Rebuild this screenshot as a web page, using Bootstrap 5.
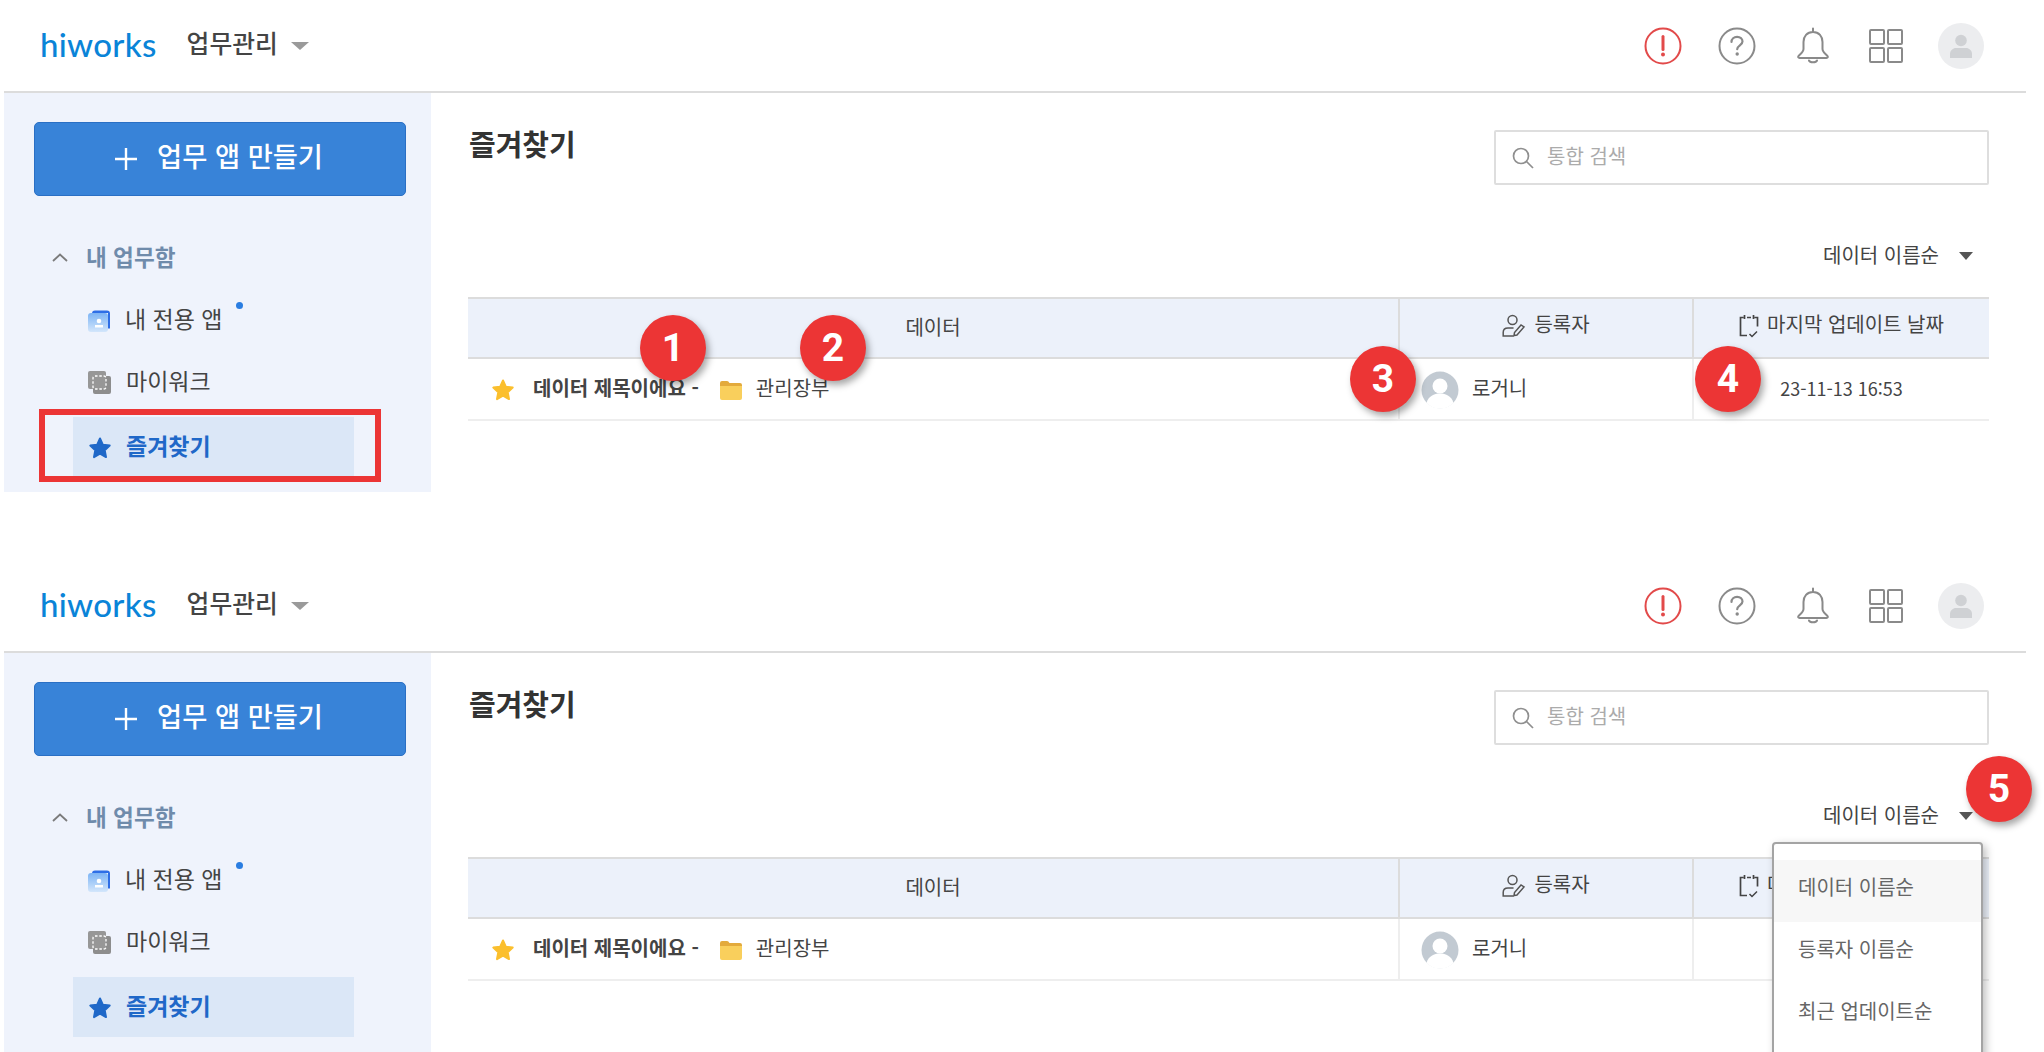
<!DOCTYPE html>
<html lang="ko">
<head>
  <meta charset="UTF-8">
  <title>hiworks 업무관리 - 즐겨찾기</title>
  <link href="https://cdn.jsdelivr.net/npm/bootstrap@5.3.3/dist/css/bootstrap.min.css" rel="stylesheet">
  <style>
    body { background: #fff; color: #333; font-family: "Noto Sans CJK KR", "Noto Sans", sans-serif; overflow: hidden; }
    .shot { position: relative; height: 492px; overflow: hidden; padding: 0 18px 0 4px; }
    .shot + .shot { margin-top: 68px; }
    .top-bar { height: 93px; border-bottom: 2px solid #dcdcdc; padding-left: 36px; padding-right: 42px; }
    .logo-text { font-family: "Lato", sans-serif; font-size: 33px; font-weight: 500; color: #0a84d8; letter-spacing: .3px; line-height: 1; margin-top: -2px; }
    .app-name { font-size: 24.800px; font-weight: 500; color: #444; margin-left: 30px; line-height: 1; margin-top: -6px; }
    .tri-down { display: inline-block; width: 0; height: 0; border-left: 9px solid transparent; border-right: 9px solid transparent; border-top: 8px solid #9a9a9a; margin-left: 13px; }
    .top-icons { gap: 38px; }
    .ic-help { margin-left: -2px; }
    .ic-bell { margin-left: 2px; }
    .ic-grid { margin-left: 1px; }
    .user-circle { width: 46px; height: 46px; border-radius: 50%; background: #ecedef; margin-left: -3px; }

    .side-panel { width: 427px; flex: none; background: #eff3fc; padding: 29px 25px 0 30px; height: 399px; }
    .make-btn { width: 372px; height: 74px; padding: 0 0 7px 3px; background: #3883d8; border: 1px solid #2a6fc4; border-radius: 5px; color: #fff; font-size: 27.300px; font-weight: 500; gap: 19px; }
    .make-btn svg { margin: 7px 0 0 -6px; }
    .make-btn:hover { background: #3883d8; color: #fff; }
    .group-title { height: 40px; margin-top: 41px; padding-left: 18px; font-size: 22.600px; font-weight: 700; color: #6f8bab; gap: 18px; }
    .side-item { position: relative; height: 60px; margin-left: 39px; width: 281px; padding: 0 0 3px 15px; gap: 15px; font-size: 23px; color: #444; }
    .side-item svg { margin-top: 4px; }
    .side-item.first-item { margin-top: 13px; }
    .side-item + .side-item { margin-top: 2px; }
    .side-item.on { background: #dbe7f7; color: #1f68c8; font-weight: 700; margin-top: 5px; gap: 14px; }
    .new-dot { width: 7px; height: 7px; border-radius: 50%; background: #2a7de1; margin: -26px 0 0 -2px; }
    .red-frame { position: absolute; left: -34px; top: -8px; width: 342px; height: 73px; border: 6px solid #ec3535; }

    .main-area { padding: 35px 37px 0 37px; min-width: 0; }
    .page-title { font-size: 29px; font-weight: 700; line-height: 31px; margin: 0 0 0 1px; color: #333; }
    .search-box { width: 495px; height: 55px; margin-top: 2px; border: 2px solid #dedede; border-radius: 2px; padding-left: 16px; gap: 13px; font-size: 20px; color: #ababab; }
    .search-hint { margin-top: -3px; }
    .sort-row { position: relative; height: 30px; margin-top: 56px; padding-right: 16px; font-size: 20px; color: #444; }
    .sort-label { margin-top: -3px; }
    .sort-tri { display: inline-block; width: 0; height: 0; border-left: 7px solid transparent; border-right: 7px solid transparent; border-top: 8px solid #555; margin-left: 20px; }
    .sort-menu { display: block; left: auto; right: 6px; top: 41px; width: 211px; min-width: 0; margin: 0; padding: 16px 0; border: 2px solid #a4a4a4; border-radius: 4px; box-shadow: 3px 3px 8px rgba(0,0,0,.25); }
    .sort-menu .dropdown-item { height: 62px; line-height: 54px; padding: 0 0 0 24px; font-size: 20px; color: #666; }
    .sort-menu .dropdown-item.picked { background: #f7f7f7; }

    .data-table { table-layout: fixed; width: 1521px; margin: 26px 0 0 0; border-collapse: collapse; font-size: 20px; color: #444; }
    .data-table th { height: 60px; background: #ecf1fa; font-weight: 400; text-align: center; vertical-align: middle; border-top: 2px solid #dcdcdc; border-bottom: 2px solid #dcdcdc; padding: 0 0 2px; color: #444; }
    .data-table td { height: 62px; background: #fff; vertical-align: middle; border-bottom: 2px solid #eeeeee; padding: 0 0 2px; color: #444; }
    .data-table th + th { border-left: 2px solid #dcdcdc; }
    .data-table td + td { border-left: 2px solid #eeeeee; }
    .data-table svg { margin-top: 3px; }
    .data-date { font-size: 18px; }
    .data-name { font-weight: 700; margin-left: 18px; }
    .folder-ic { margin: 0 14px 0 21px; }
    .row-inner { padding-left: 23px; }
    .who-inner { padding-left: 21px; gap: 13px; }

    .num-pin { position: absolute; width: 66px; height: 66px; border-radius: 50%; background: #ec3535; color: #fff; font-family: "Roboto", sans-serif; font-weight: 700; font-size: 39px; line-height: 66px; text-align: center; box-shadow: 3px 4px 7px rgba(0,0,0,.35); }
    .pin-1 { left: 640px; top: 315px; }
    .pin-2 { left: 800px; top: 315px; }
    .pin-3 { left: 1350px; top: 346px; }
    .pin-4 { left: 1695px; top: 346px; }
    .pin-5 { left: 1966px; top: 196px; }
  </style>
</head>
<body>

<svg width="0" height="0" class="position-absolute">
  <defs>
    <linearGradient id="appGrad" x1="0" y1="0" x2="0" y2="1">
      <stop offset="0" stop-color="#7db4f5"/><stop offset="1" stop-color="#d3e6fb"/>
    </linearGradient>
    <symbol id="ic-alert" viewBox="0 0 38 38"><circle cx="19" cy="19" r="17.5" fill="none" stroke="#e24a4a" stroke-width="2"/><path d="M19 9.5v13" stroke="#e24a4a" stroke-width="3" stroke-linecap="round"/><circle cx="19" cy="27.5" r="2" fill="#e24a4a"/></symbol>
    <symbol id="ic-help" viewBox="0 0 38 38"><circle cx="19" cy="19" r="17.5" fill="none" stroke="#8a8a8a" stroke-width="2"/><path d="M13.5 15c0-3.2 2.5-5.2 5.6-5.2 3 0 5.4 1.9 5.4 4.7 0 3.7-5.3 3.9-5.3 7.7" fill="none" stroke="#8a8a8a" stroke-width="2.2" stroke-linecap="round"/><circle cx="19.2" cy="27" r="1.7" fill="#8a8a8a"/></symbol>
    <symbol id="ic-bell" viewBox="0 0 34 38"><path d="M17 1.500v3.500M17 5c-6 0-9.500 4.500-9.500 10v7c0 3-3 5-5 7-.8 1-.2 2 1 2h27c1.200 0 1.800-1 1-2-2-2-5-4-5-7v-7C26.500 9.500 23 5 17 5zM13 33.500c1 2.400 7 2.400 8 0" fill="none" stroke="#8a8a8a" stroke-width="2" stroke-linecap="round" stroke-linejoin="round"/></symbol>
    <symbol id="ic-grid" viewBox="0 0 34 34"><g fill="none" stroke="#8a8a8a" stroke-width="2"><rect x="1" y="1" width="14" height="14" rx="1"/><rect x="19" y="1" width="14" height="14" rx="1"/><rect x="1" y="19" width="14" height="14" rx="1"/><rect x="19" y="19" width="14" height="14" rx="1"/></g></symbol>
    <symbol id="ic-user" viewBox="0 0 24 26"><circle cx="12" cy="7.500" r="5.800" fill="#cfd1d4"/><path d="M1 25v-4c0-3.500 3-6 6-6h10c3 0 6 2.500 6 6v4z" fill="#cfd1d4"/></symbol>
    <symbol id="ic-plus" viewBox="0 0 24 24"><path d="M12 1v22M1 12h22" stroke="#fff" stroke-width="2.400"/></symbol>
    <symbol id="ic-up" viewBox="0 0 16 9"><path d="M1 8l7-6.500L15 8" fill="none" stroke="#7b7b7b" stroke-width="1.800"/></symbol>
    <symbol id="ic-app" viewBox="0 0 22 22"><path d="M4 3.500Q4 .5 7 .5h12q3 0 3 3v15h-2V3H4z" fill="#2e6ee6"/><rect x="0" y="3" width="20" height="19" rx="3" fill="url(#appGrad)"/><circle cx="11" cy="11" r="2.300" fill="#fff"/><rect x="7" y="15" width="8" height="2.500" fill="#fff"/></symbol>
    <symbol id="ic-work" viewBox="0 0 23 23"><rect x="0" y="0" width="18" height="18" rx="2" fill="#979797"/><rect x="5" y="5" width="18" height="18" rx="2" fill="#8d8d8d"/><rect x="5" y="5" width="13" height="13" rx="2" fill="#979797" stroke="#fff" stroke-width="1.300" stroke-dasharray="2.500 1.800"/></symbol>
    <symbol id="ic-star" viewBox="0 0 24 24"><path d="M12 2.500l2.900 6.300 6.800.8-5 4.700 1.300 6.800-6-3.400-6 3.400 1.300-6.800-5-4.700 6.800-.8z" stroke-width="2" stroke-linejoin="round"/></symbol>
    <symbol id="ic-folder" viewBox="0 0 22 20"><path d="M0 3q0-2 2-2h5q1.500 0 2.500 2h10.500q2 0 2 2v3H0z" fill="#e3aa3c"/><path d="M0 6h22v12q0 2-2 2H2q-2 0-2-2z" fill="#f9cf5c"/></symbol>
    <symbol id="ic-writer" viewBox="0 0 24 24"><g fill="none" stroke="#555" stroke-width="1.500" stroke-linecap="round"><circle cx="10.500" cy="6" r="4.500"/><path d="M11 14H6c-3 0-4.800 2-4.800 4.500V22h10"/><path d="M15 21l7-8-3-2-6.500 7.500-.5 3z"/></g></symbol>
    <symbol id="ic-cal" viewBox="0 0 20 24"><g fill="none" stroke="#444" stroke-width="1.700"><path d="M4.500 3.500H1.500v18H8M15.500 3.500h3v9M8 3.500h4M5.500 1v4M14.500 1v4"/><path d="M10.500 20l2.500 2.500 5-5" stroke-width="1.500"/></g></symbol>
    <symbol id="ic-glass" viewBox="0 0 22 22"><circle cx="9" cy="9" r="7.500" fill="none" stroke="#8f8f8f" stroke-width="1.700"/><path d="M14.500 14.500L21 21" stroke="#8f8f8f" stroke-width="1.700"/></symbol>
    <symbol id="ic-face" viewBox="0 0 38 38"><circle cx="19" cy="19" r="18.500" fill="#c2cad2"/><circle cx="19" cy="15" r="7.500" fill="#fff"/><path d="M5.500 32c2-7 7.500-9.500 13.500-9.500S30.500 25 32.500 32A18.500 18.500 0 0 1 5.500 32z" fill="#fff"/></symbol>
  </defs>
</svg>

<!-- 위쪽 화면 -->
<section class="shot">
  <header class="top-bar d-flex align-items-center">
    <span class="logo-text">hiworks</span>
    <span class="app-name">업무관리</span>
    <span class="tri-down"></span>
    <div class="top-icons d-flex align-items-center ms-auto">
      <svg width="38" height="38"><use href="#ic-alert"/></svg>
      <svg class="ic-help" width="38" height="38"><use href="#ic-help"/></svg>
      <svg class="ic-bell" width="34" height="38"><use href="#ic-bell"/></svg>
      <svg class="ic-grid" width="34" height="34"><use href="#ic-grid"/></svg>
      <span class="user-circle d-flex align-items-center justify-content-center"><svg width="24" height="26"><use href="#ic-user"/></svg></span>
    </div>
  </header>
  <div class="d-flex">
    <aside class="side-panel">
      <button class="make-btn btn d-flex align-items-center justify-content-center"><svg width="24" height="24"><use href="#ic-plus"/></svg>업무 앱 만들기</button>
      <div class="group-title d-flex align-items-center"><svg width="16" height="9"><use href="#ic-up"/></svg>내 업무함</div>
      <div class="side-item first-item d-flex align-items-center"><svg width="22" height="22"><use href="#ic-app"/></svg>내 전용 앱<span class="new-dot"></span></div>
      <div class="side-item d-flex align-items-center"><svg width="23" height="23"><use href="#ic-work"/></svg>마이워크</div>
      <div class="side-item on d-flex align-items-center"><svg width="24" height="24" fill="#1f68c8" stroke="#1f68c8"><use href="#ic-star"/></svg>즐겨찾기<span class="red-frame"></span></div>
    </aside>
    <main class="main-area flex-grow-1">
      <div class="d-flex justify-content-between align-items-start">
        <h1 class="page-title">즐겨찾기</h1>
        <div class="search-box d-flex align-items-center"><svg width="22" height="22"><use href="#ic-glass"/></svg><span class="search-hint">통합 검색</span></div>
      </div>
      <div class="sort-row d-flex align-items-center justify-content-end"><span class="sort-label">데이터 이름순</span><span class="sort-tri"></span></div>
      <table class="data-table">
        <colgroup><col style="width:931px"><col style="width:294px"><col style="width:296px"></colgroup>
        <thead>
          <tr>
            <th>데이터</th>
            <th><span class="d-inline-flex align-items-center gap-2"><svg width="24" height="24"><use href="#ic-writer"/></svg>등록자</span></th>
            <th><span class="d-inline-flex align-items-center gap-2"><svg width="20" height="24"><use href="#ic-cal"/></svg>마지막 업데이트 날짜</span></th>
          </tr>
        </thead>
        <tbody>
          <tr>
            <td><div class="row-inner d-flex align-items-center"><svg width="24" height="24" fill="#fbbf2d" stroke="#fbbf2d"><use href="#ic-star"/></svg><span class="data-name">데이터 제목이에요 -</span><svg class="folder-ic" width="22" height="20"><use href="#ic-folder"/></svg>관리장부</div></td>
            <td><div class="who-inner d-flex align-items-center"><svg width="38" height="38"><use href="#ic-face"/></svg>로거니</div></td>
            <td class="text-center data-date">23-11-13 16:53</td>
          </tr>
        </tbody>
      </table>
    </main>
  </div>
  <span class="num-pin pin-1">1</span>
  <span class="num-pin pin-2">2</span>
  <span class="num-pin pin-3">3</span>
  <span class="num-pin pin-4">4</span>
</section>

<!-- 아래쪽 화면 -->
<section class="shot">
  <header class="top-bar d-flex align-items-center">
    <span class="logo-text">hiworks</span>
    <span class="app-name">업무관리</span>
    <span class="tri-down"></span>
    <div class="top-icons d-flex align-items-center ms-auto">
      <svg width="38" height="38"><use href="#ic-alert"/></svg>
      <svg class="ic-help" width="38" height="38"><use href="#ic-help"/></svg>
      <svg class="ic-bell" width="34" height="38"><use href="#ic-bell"/></svg>
      <svg class="ic-grid" width="34" height="34"><use href="#ic-grid"/></svg>
      <span class="user-circle d-flex align-items-center justify-content-center"><svg width="24" height="26"><use href="#ic-user"/></svg></span>
    </div>
  </header>
  <div class="d-flex">
    <aside class="side-panel">
      <button class="make-btn btn d-flex align-items-center justify-content-center"><svg width="24" height="24"><use href="#ic-plus"/></svg>업무 앱 만들기</button>
      <div class="group-title d-flex align-items-center"><svg width="16" height="9"><use href="#ic-up"/></svg>내 업무함</div>
      <div class="side-item first-item d-flex align-items-center"><svg width="22" height="22"><use href="#ic-app"/></svg>내 전용 앱<span class="new-dot"></span></div>
      <div class="side-item d-flex align-items-center"><svg width="23" height="23"><use href="#ic-work"/></svg>마이워크</div>
      <div class="side-item on d-flex align-items-center"><svg width="24" height="24" fill="#1f68c8" stroke="#1f68c8"><use href="#ic-star"/></svg>즐겨찾기</div>
    </aside>
    <main class="main-area flex-grow-1">
      <div class="d-flex justify-content-between align-items-start">
        <h1 class="page-title">즐겨찾기</h1>
        <div class="search-box d-flex align-items-center"><svg width="22" height="22"><use href="#ic-glass"/></svg><span class="search-hint">통합 검색</span></div>
      </div>
      <div class="sort-row d-flex align-items-center justify-content-end"><span class="sort-label">데이터 이름순</span><span class="sort-tri"></span>
        <ul class="dropdown-menu sort-menu list-unstyled">
          <li><a class="dropdown-item picked" href="#">데이터 이름순</a></li>
          <li><a class="dropdown-item" href="#">등록자 이름순</a></li>
          <li><a class="dropdown-item" href="#">최근 업데이트순</a></li>
        </ul>
      </div>
      <table class="data-table">
        <colgroup><col style="width:931px"><col style="width:294px"><col style="width:296px"></colgroup>
        <thead>
          <tr>
            <th>데이터</th>
            <th><span class="d-inline-flex align-items-center gap-2"><svg width="24" height="24"><use href="#ic-writer"/></svg>등록자</span></th>
            <th><span class="d-inline-flex align-items-center gap-2"><svg width="20" height="24"><use href="#ic-cal"/></svg>마지막 업데이트 날짜</span></th>
          </tr>
        </thead>
        <tbody>
          <tr>
            <td><div class="row-inner d-flex align-items-center"><svg width="24" height="24" fill="#fbbf2d" stroke="#fbbf2d"><use href="#ic-star"/></svg><span class="data-name">데이터 제목이에요 -</span><svg class="folder-ic" width="22" height="20"><use href="#ic-folder"/></svg>관리장부</div></td>
            <td><div class="who-inner d-flex align-items-center"><svg width="38" height="38"><use href="#ic-face"/></svg>로거니</div></td>
            <td class="text-center data-date">23-11-13 16:53</td>
          </tr>
        </tbody>
      </table>
    </main>
  </div>
  <span class="num-pin pin-5">5</span>
</section>

<script src="https://cdn.jsdelivr.net/npm/bootstrap@5.3.3/dist/js/bootstrap.bundle.min.js"></script>
</body>
</html>
